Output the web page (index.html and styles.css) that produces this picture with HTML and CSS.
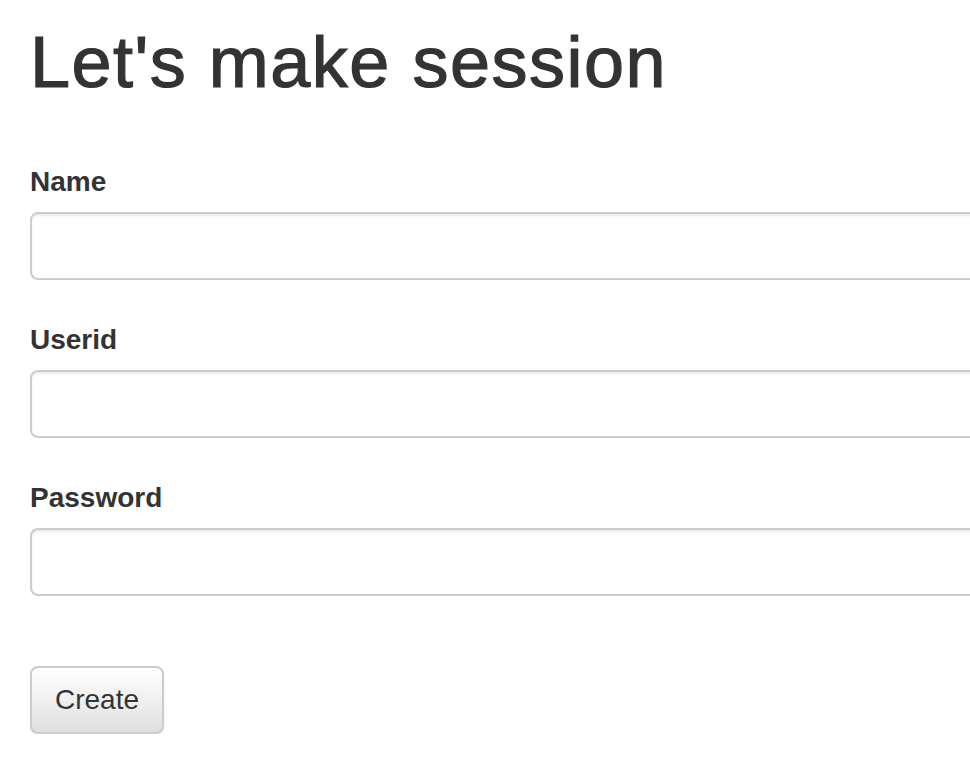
FILE: index.html
```html
<!DOCTYPE html>
<html lang="en">
<head>
<meta charset="utf-8">
<title>Let's make session</title>
<link rel="stylesheet" href="styles.css">
</head>
<body>
<div class="page">
  <h1 class="title">Let's make session</h1>
  <form class="session-form">
    <div class="form-group">
      <label class="form-label" for="name">Name</label>
      <input class="form-control" id="name" type="text">
    </div>
    <div class="form-group">
      <label class="form-label" for="userid">Userid</label>
      <input class="form-control" id="userid" type="text">
    </div>
    <div class="form-group">
      <label class="form-label" for="password">Password</label>
      <input class="form-control" id="password" type="password">
    </div>
    <button class="btn" type="button">Create</button>
  </form>
</div>
</body>
</html>
```
FILE: styles.css
```css
html, body {
  margin: 0;
  padding: 0;
  background: #fff;
  overflow: hidden;
}
body {
  font-family: "Liberation Sans", Arial, Helvetica, sans-serif;
  color: #333;
}
.page {
  padding: 23px 0 0 30px;
}
.title {
  margin: 0 0 60px 0;
  font-size: 72px;
  line-height: 1.1;
  font-weight: 400;
  letter-spacing: 1.5px;
  -webkit-text-stroke: 1.2px #333;
  color: #333;
}
.session-form {
  display: flex;
  flex-direction: column;
  align-items: flex-start;
}
.form-group {
  display: flex;
  flex-direction: column;
  margin-bottom: 40px;
}
.form-label {
  font-size: 28px;
  line-height: 40px;
  font-weight: 700;
  margin-bottom: 10px;
}
.form-control {
  box-sizing: border-box;
  width: 1100px;
  height: 68px;
  border: 2px solid #ccc;
  border-radius: 8px;
  box-shadow: inset 0 2px 2px rgba(0, 0, 0, 0.075);
  background: #fff;
  padding: 12px 24px;
  font-size: 28px;
  font-family: inherit;
  margin: 0;
}
.btn {
  box-sizing: border-box;
  margin-top: 30px;
  height: 68px;
  padding: 0 23px;
  border: 2px solid #ccc;
  border-radius: 8px;
  background: linear-gradient(to bottom, #fff 0%, #e0e0e0 100%);
  box-shadow: inset 0 2px 0 rgba(255, 255, 255, 0.15), 0 2px 2px rgba(0, 0, 0, 0.075);
  font-family: inherit;
  font-size: 28px;
  color: #333;
  line-height: 40px;
}
```
